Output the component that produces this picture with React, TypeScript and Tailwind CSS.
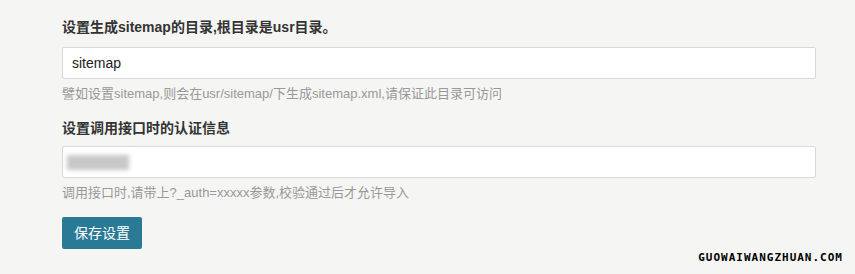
import React from "react";

export default function App() {
  const font = { fontFamily: '"Liberation Sans", Arial, "Noto Sans CJK SC", sans-serif' };
  return (
    <div
      className="relative w-[855px] h-[274px] overflow-hidden bg-[#f5f5f3] px-[62px] pt-[17px] flex flex-col"
      style={font}
    >
      <div className="text-[14px] leading-[20px] font-bold text-[#333]">
        设置生成sitemap的目录,根目录是usr目录。
      </div>
      <div className="mt-[10px] h-[32px] w-[754px] bg-white border border-[#d9d9d9] rounded-[2px] flex items-center px-[9px] text-[14px] text-[#222]">
        sitemap
      </div>
      <div className="mt-[5px] text-[13px] leading-[20px] text-[#999]">
        譬如设置sitemap,则会在usr/sitemap/下生成sitemap.xml,请保证此目录可访问
      </div>
      <div className="mt-[14px] text-[14px] leading-[20px] font-bold text-[#333]">
        设置调用接口时的认证信息
      </div>
      <div className="mt-[8px] h-[32px] w-[754px] bg-white border border-[#d9d9d9] rounded-[2px] flex items-center px-[4px]">
        <div className="w-[62px] h-[15px] bg-[#c8c8c8] blur-[2px]" />
      </div>
      <div className="mt-[5px] text-[13px] leading-[20px] text-[#999]">
        调用接口时,请带上?_auth=xxxxx参数,校验通过后才允许导入
      </div>
      <div className="mt-[14px]">
        <button className="h-[32px] w-[80px] rounded-[2px] bg-[#2a7a96] text-white text-[14px] flex items-center justify-center">
          保存设置
        </button>
      </div>
      <div
        className="absolute right-[12px] bottom-[8px] text-[11px] font-bold tracking-[1px] text-black"
        style={{ fontFamily: '"DejaVu Sans Mono", monospace' }}
      >
        GUOWAIWANGZHUAN.COM
      </div>
    </div>
  );
}
